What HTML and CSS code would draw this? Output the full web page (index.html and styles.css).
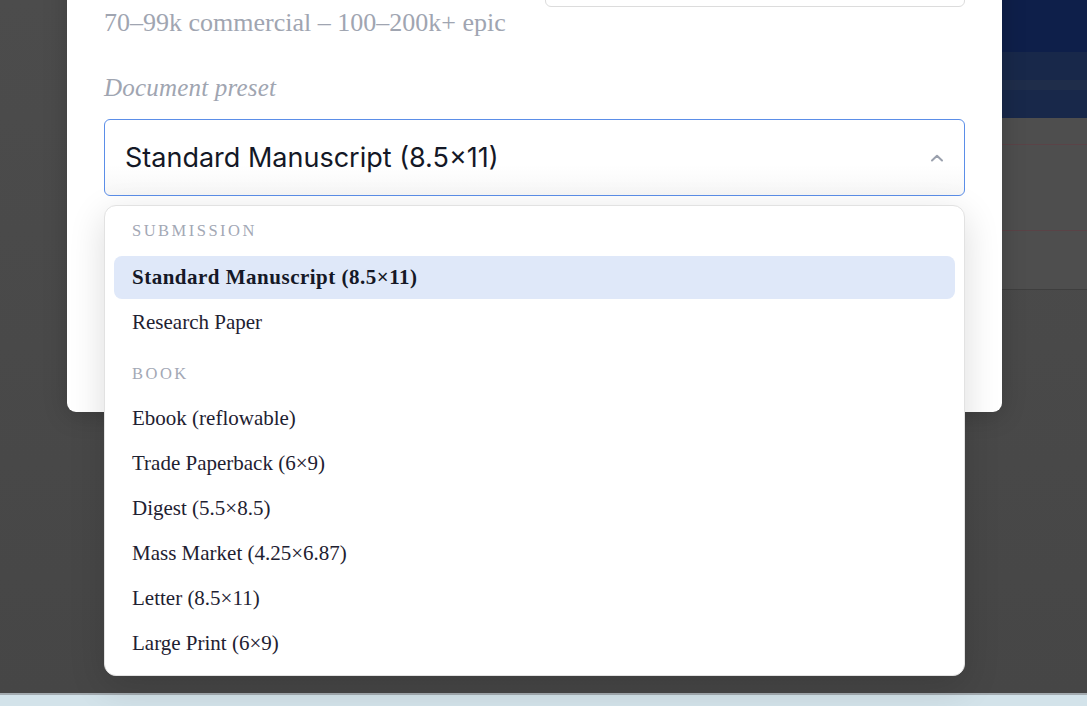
FILE: index.html
```html
<!DOCTYPE html>
<html lang="en">
<head>
    <meta charset="UTF-8">
    <title>Document Settings</title>
    <link rel="stylesheet" href="styles.css">
</head>
<body>
    <div class="page">
        <div class="page-main">
            <div class="page-side">
                <div class="side-header">
                    <div class="band band-top"></div>
                    <div class="band band-mid"></div>
                    <div class="band band-light"></div>
                    <div class="band band-mid"></div>
                </div>
                <div class="side-row row-red"></div>
                <div class="side-row row-red tall"></div>
                <div class="side-row row-dark"></div>
            </div>
        </div>
        <div class="page-footer"></div>
    </div>

    <div class="modal">
        <div class="field-row">
            <div class="field">
                <div class="input-box"></div>
                <p class="hint">70–99k commercial – 100–200k+ epic</p>
            </div>
            <div class="field">
                <div class="input-box"></div>
            </div>
        </div>

        <label class="field-label">Document preset</label>
        <div class="select open">
            <span class="select-value">Standard Manuscript (8.5×11)</span>
            <svg class="chevron" width="14" height="8" viewBox="0 0 14 8">
                <path d="M2 6.5 L7 1.8 L12 6.5" fill="none" stroke="#9aa0ad" stroke-width="2" stroke-linecap="round" stroke-linejoin="round"/>
            </svg>
        </div>

        <div class="dropdown">
            <div class="group-label">Submission</div>
            <div class="option selected">Standard Manuscript (8.5×11)</div>
            <div class="option">Research Paper</div>

            <div class="group-label second">Book</div>
            <div class="option">Ebook (reflowable)</div>
            <div class="option">Trade Paperback (6×9)</div>
            <div class="option">Digest (5.5×8.5)</div>
            <div class="option">Mass Market (4.25×6.87)</div>
            <div class="option">Letter (8.5×11)</div>
            <div class="option">Large Print (6×9)</div>
        </div>
    </div>
</body>
</html>
```

FILE: styles.css
```css
* {
    box-sizing: border-box;
    margin: 0;
    padding: 0;
}

html, body {
    height: 100%;
    overflow: hidden;
}

body {
    font-family: "Liberation Serif", "Times New Roman", serif;
    background-color: #4a4a4a;
    color: #1e2131;
}

/* Page behind the backdrop */
.page {
    height: 100%;
    display: flex;
    flex-direction: column;
}

.page-main {
    flex: 1;
    display: flex;
    justify-content: flex-end;
    background: linear-gradient(to bottom, #4c4c4c, #464646);
}

.page-side {
    width: 85px;
}

.side-header {
    display: flex;
    flex-direction: column;
}

.band-top {
    height: 52px;
    background-color: #0e1f4a;
}

.band-mid {
    height: 28px;
    background-color: #18284a;
}

.band-light {
    height: 10px;
    background-color: #1f2d4a;
}

.side-row {
    height: 27px;
    border-bottom: 1px solid #5a4347;
    background-color: #4e4e4e;
}

.side-row.tall {
    height: 86px;
}

.side-row.row-dark {
    height: 59px;
    border-bottom: 1px solid #3e3e3e;
}

.page-footer {
    height: 13px;
    background-color: #d3e3ea;
    border-top: 2px solid #a3abb0;
}

/* Modal */
.modal {
    position: absolute;
    top: -70px;
    left: 67px;
    width: 935px;
    height: 482px;
    padding: 13px 37px 0;
    background-color: #ffffff;
    border-radius: 9px;
    box-shadow: 0 4px 24px rgba(0, 0, 0, 0.18);
}

.field-row {
    display: grid;
    grid-template-columns: 1fr 1fr;
    gap: 20px;
}

.input-box {
    height: 64px;
    border: 1px solid #dcdcdc;
    border-radius: 6px;
}

.field:first-child .input-box {
    visibility: hidden;
}

.hint {
    margin-top: 1px;
    font-size: 26px;
    line-height: 30px;
    color: #a0a5b1;
}

.field-label {
    display: block;
    margin-top: 36px;
    font-size: 25px;
    line-height: 28px;
    letter-spacing: 0.2px;
    font-style: italic;
    color: #a0a5b1;
}

.select {
    margin-top: 17px;
    height: 77px;
    display: flex;
    align-items: center;
    justify-content: space-between;
    padding: 0 20px 0 20px;
    border: 1px solid #5b8ee8;
    border-radius: 6px;
    background: linear-gradient(to bottom, #ffffff 60%, #f7f7f7);
}

.select-value {
    font-family: Inter, "Liberation Sans", sans-serif;
    font-size: 27px;
    color: #141826;
}

/* Dropdown menu */
.dropdown {
    position: absolute;
    top: 275px;
    left: 37px;
    width: 861px;
    padding: 10px 9px 8px;
    background-color: #ffffff;
    border: 1px solid #e2e2e2;
    border-radius: 12px;
    box-shadow: 0 10px 36px rgba(0, 0, 0, 0.14);
}

.group-label {
    padding: 5px 18px 15px;
    font-size: 16.5px;
    line-height: 20px;
    letter-spacing: 2.5px;
    text-transform: uppercase;
    color: #a3a8b5;
}

.group-label.second {
    margin-top: 15px;
    padding-bottom: 13px;
}

.option {
    height: 43px;
    margin-bottom: 2px;
    padding: 0 18px;
    display: flex;
    align-items: center;
    font-size: 21px;
    color: #1e2131;
    border-radius: 8px;
}

.option.selected {
    background-color: #dfe8f9;
    font-weight: 700;
    letter-spacing: 0.5px;
    color: #151827;
}
```
